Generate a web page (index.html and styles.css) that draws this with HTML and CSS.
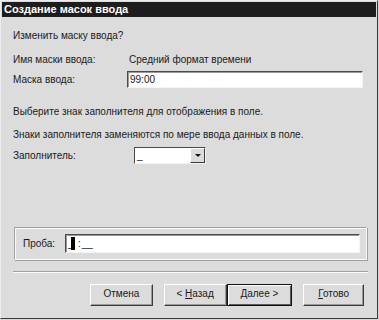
FILE: index.html
```html
<!DOCTYPE html>
<html lang="ru">
<head>
<meta charset="utf-8">
<title>Создание масок ввода</title>
<link rel="stylesheet" href="styles.css">
</head>
<body>
<div class="window">
  <div class="titlebar">Создание масок ввода</div>
  <div class="content">
    <div class="line q">Изменить маску ввода?</div>
    <div class="row name-row">
      <div class="label">Имя маски ввода:</div>
      <div class="value">Средний формат времени</div>
    </div>
    <div class="row mask-row">
      <div class="label">Маска ввода:</div>
      <div class="textbox mask">99:00</div>
    </div>
    <div class="line l1">Выберите знак заполнителя для отображения в поле.</div>
    <div class="line l2">Знаки заполнителя заменяются по мере ввода данных в поле.</div>
    <div class="row fill-row">
      <div class="label">Заполнитель:</div>
      <div class="combo">
        <span class="combo-text">_</span>
        <span class="combo-btn"><span class="arrow"></span></span>
      </div>
    </div>
    <div class="group">
      <div class="group-label">Проба:</div>
      <div class="textbox probe"><span class="u1">_</span><span class="sel"></span><span class="colon">:</span><span class="u2">__</span></div>
    </div>
    <div class="separator"></div>
    <div class="buttons">
      <div class="btn cancel">Отмена</div>
      <div class="btn back">&lt; <u>Н</u>азад</div>
      <div class="btn next default"><u>Д</u>алее &gt;</div>
      <div class="btn done"><u>Г</u>отово</div>
    </div>
  </div>
</div>
</body>
</html>
```
FILE: styles.css
```css
html, body {
  margin: 0;
  padding: 0;
  background: #d6d6d6;
}
body {
  font-family: "Liberation Sans", Arial, sans-serif;
  font-size: 10px;
  color: #1a1a1a;
}
.window {
  box-sizing: border-box;
  width: 378px;
  height: 319px;
  background: #dcdcdc;
  border-top: 1px solid #ececec;
  border-left: 1px solid #ececec;
  border-right: 1px solid #3a3a3a;
  border-bottom: 1px solid #3a3a3a;
  padding: 1px 1px 0 1px;
}
.titlebar {
  height: 15px;
  background: #1d1d1d;
  color: #ffffff;
  font-family: "Liberation Sans", Arial, sans-serif;
  font-weight: bold;
  font-size: 11px;
  line-height: 15px;
  padding-left: 2px;
}
.content {
  padding: 0 12px 0 11px;
}
.line {
  height: 14px;
  line-height: 14px;
}
.q { margin-top: 12px; }
.row {
  display: flex;
  align-items: center;
}
.label {
  width: 114px;
  flex: none;
}
.name-row {
  margin-top: 9px;
  height: 14px;
}
.name-row .value {
  padding-left: 2px;
}
.mask-row {
  margin-top: 5px;
  height: 17px;
}
.textbox {
  box-sizing: border-box;
  background: #ffffff;
  border-top: 1px solid #4a4a4a;
  border-left: 1px solid #4a4a4a;
  border-right: 1px solid #f4f4f4;
  border-bottom: 1px solid #f4f4f4;
  box-shadow: inset 1px 1px 0 #9a9a9a;
}
.mask {
  width: 236px;
  height: 17px;
  line-height: 15px;
  padding-left: 2px;
}
.l1 { margin-top: 17px; }
.l2 { margin-top: 9px; }
.fill-row {
  margin-top: 5px;
  height: 17px;
}
.combo {
  box-sizing: border-box;
  margin-left: 7px;
  width: 72px;
  height: 17px;
  background: #ffffff;
  border-top: 1px solid #4a4a4a;
  border-left: 1px solid #4a4a4a;
  border-right: 1px solid #f4f4f4;
  border-bottom: 1px solid #f4f4f4;
  display: flex;
  align-items: stretch;
}
.combo-text {
  flex: 1;
  line-height: 15px;
  padding-left: 2px;
}
.combo-btn {
  box-sizing: border-box;
  width: 15px;
  background: #dcdcdc;
  border-top: 1px solid #ffffff;
  border-left: 1px solid #ffffff;
  border-right: 1px solid #3a3a3a;
  border-bottom: 1px solid #3a3a3a;
  display: flex;
  align-items: center;
  justify-content: center;
}
.arrow {
  width: 0;
  height: 0;
  border-left: 3px solid transparent;
  border-right: 3px solid transparent;
  border-top: 3px solid #111;
}
.group {
  box-sizing: border-box;
  margin-top: 63px;
  margin-left: 1px;
  width: 353px;
  height: 33px;
  border-top: 1px solid #a0a0a0;
  border-left: 1px solid #a0a0a0;
  border-right: 1px solid #fafafa;
  border-bottom: 1px solid #fafafa;
  box-shadow: inset 1px 1px 0 #fafafa, 1px 1px 0 #a0a0a0;
  display: flex;
  align-items: center;
  padding-left: 8px;
}
.group-label {
  width: 42px;
}
.probe {
  width: 295px;
  height: 19px;
  line-height: 17px;
  padding-left: 2px;
  display: flex;
  align-items: flex-start;
}
.probe span {
  display: block;
}
.probe .u1 {
  width: 3px;
  overflow: visible;
}
.probe .sel {
  background: #000;
  width: 4px;
  height: 13px;
  margin-top: 2px;
}
.probe .colon {
  margin-left: 3px;
}
.probe .u2 {
  margin-left: 1px;
}
.separator {
  margin-top: 11px;
  height: 0;
  border-top: 1px solid #a0a0a0;
  border-bottom: 1px solid #fafafa;
  width: 355px;
}
.buttons {
  display: flex;
  margin-top: 11px;
  padding-left: 77px;
}
.btn {
  box-sizing: border-box;
  height: 22px;
  line-height: 18px;
  text-align: center;
  background: #dcdcdc;
  border-top: 1px solid #ffffff;
  border-left: 1px solid #ffffff;
  border-right: 1px solid #3a3a3a;
  border-bottom: 1px solid #3a3a3a;
  box-shadow: inset -1px -1px 0 #9a9a9a;
}
.btn u { text-decoration: underline; }
.cancel { width: 63px; }
.back { width: 63px; margin-left: 11px; }
.next { width: 66px; }
.done { width: 61px; margin-left: 11px; }
.default {
  border: 1px solid #111;
  box-shadow: inset 1px 1px 0 #ffffff, inset -1px -1px 0 #5a5a5a;
}
```
